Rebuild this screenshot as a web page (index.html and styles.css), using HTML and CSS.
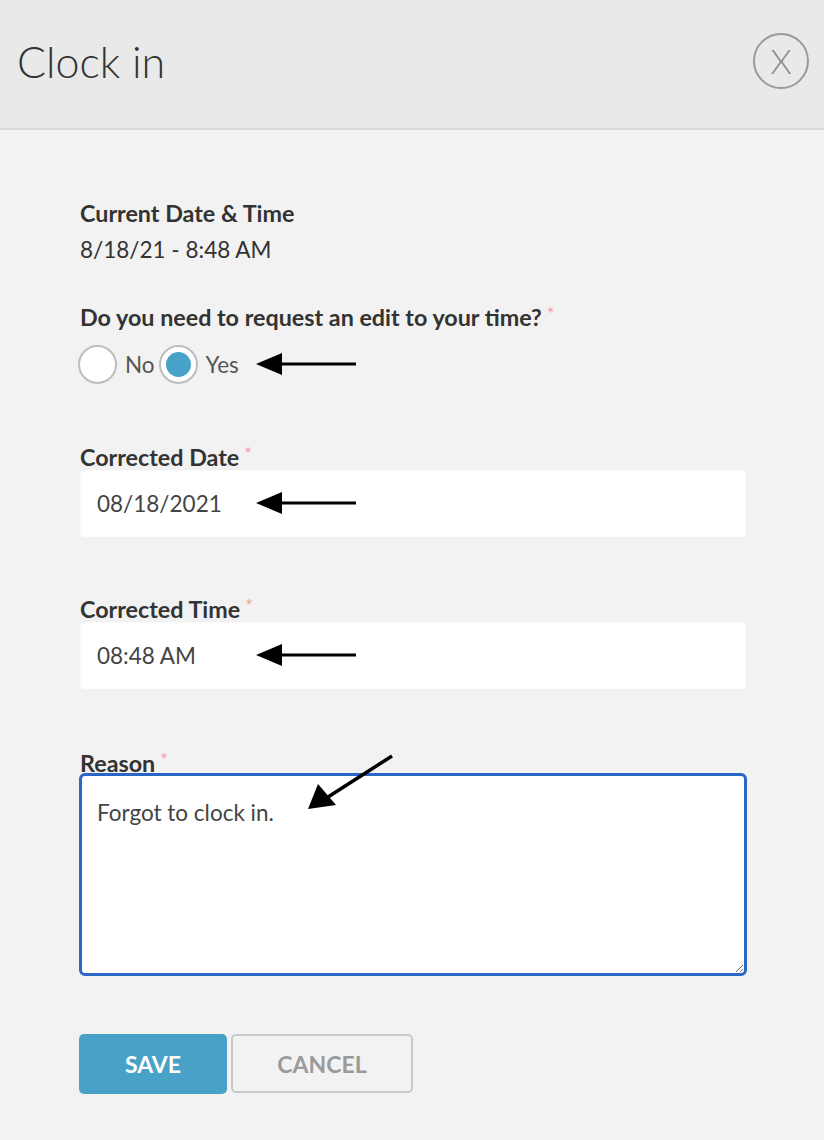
FILE: index.html
```html
<!DOCTYPE html>
<html lang="en">
<head>
    <meta charset="UTF-8">
    <meta name="viewport" content="width=device-width, initial-scale=1.0">
    <title>Clock in</title>
    <link rel="stylesheet" href="styles.css">
</head>
<body>
    <div class="modal">
        <header class="modal-header">
            <h1>Clock in</h1>
            <button class="close-btn" type="button">X</button>
        </header>

        <form class="modal-body">
            <div class="field">
                <div class="label">Current Date &amp; Time</div>
                <div class="value">8/18/21 - 8:48 AM</div>
            </div>

            <div class="field question">
                <div class="label">Do you need to request an edit to your time?<span class="req">*</span></div>
                <div class="radios">
                    <span class="radio"></span>
                    <span class="radio-text">No</span>
                    <span class="radio checked"></span>
                    <span class="radio-text">Yes</span>
                    <svg class="arrow" width="102" height="24" viewBox="0 0 102 24"><path d="M100 12H22" stroke="#000" stroke-width="3"/><path d="M0 12L26 1V23Z" fill="#000"/></svg>
                </div>
            </div>

            <div class="field gap-date">
                <div class="label">Corrected Date<span class="req">*</span></div>
                <div class="input">
                    08/18/2021
                    <svg class="arrow" width="102" height="24" viewBox="0 0 102 24"><path d="M100 12H22" stroke="#000" stroke-width="3"/><path d="M0 12L26 1V23Z" fill="#000"/></svg>
                </div>
            </div>

            <div class="field gap-time">
                <div class="label">Corrected Time<span class="req">*</span></div>
                <div class="input">
                    08:48 AM
                    <svg class="arrow" width="102" height="24" viewBox="0 0 102 24"><path d="M100 12H22" stroke="#000" stroke-width="3"/><path d="M0 12L26 1V23Z" fill="#000"/></svg>
                </div>
            </div>

            <div class="field gap-date reason">
                <div class="label">Reason<span class="req">*</span></div>
                <textarea class="textarea">Forgot to clock in.</textarea>
                <svg class="arrow-diag" width="90" height="60" viewBox="0 0 90 60"><path d="M86 3L22 44" stroke="#000" stroke-width="3.5"/><path d="M2 56L12 31L30 52Z" fill="#000"/></svg>
            </div>

            <div class="actions">
                <button class="btn btn-save" type="button">Save</button>
                <button class="btn btn-cancel" type="button">Cancel</button>
            </div>
        </form>
    </div>
</body>
</html>
```

FILE: styles.css
```css
* {
    margin: 0;
    padding: 0;
    box-sizing: border-box;
}

body {
    font-family: Lato, 'Open Sans', sans-serif;
    background-color: #f2f2f2;
    color: #333;
}

.modal {
    width: 824px;
    min-height: 1140px;
    background-color: #f2f2f2;
}

.modal-header {
    height: 130px;
    background-color: #e9e9e9;
    border-bottom: 2px solid #d9d9d9;
    display: flex;
    align-items: center;
    justify-content: space-between;
    padding: 0 15px 6px 17px;
}

.modal-header h1 {
    font-weight: 300;
    font-size: 43px;
    color: #333;
}

.close-btn {
    width: 56px;
    height: 56px;
    border-radius: 50%;
    border: 2px solid #9a9a9a;
    background: transparent;
    font-family: Lato, sans-serif;
    font-weight: 300;
    font-size: 34px;
    color: #8a8a8a;
    display: flex;
    align-items: center;
    justify-content: center;
    padding-bottom: 1px;
}

.modal-body {
    padding: 71px 78px 40px 80px;
    display: flex;
    flex-direction: column;
}

.field {
    position: relative;
}

.label {
    font-weight: 700;
    font-size: 23.3px;
    line-height: 24px;
    color: #333;
}

.req {
    color: #f29a9a;
    font-weight: 400;
    font-size: 18px;
    margin-left: 5px;
    vertical-align: top;
    position: relative;
    top: -4px;
}

.value {
    font-size: 22.5px;
    line-height: 24px;
    margin-top: 13px;
    color: #333;
}

.question {
    margin-top: 43px;
}

.radios {
    display: flex;
    align-items: center;
    margin-top: 16px;
    margin-left: -2px;
    height: 38px;
    position: relative;
}

.radio {
    width: 39px;
    height: 39px;
    border-radius: 50%;
    border: 2px solid #bdbdbd;
    background-color: #fff;
    display: flex;
    align-items: center;
    justify-content: center;
}

.radio.checked::after {
    content: "";
    width: 25px;
    height: 25px;
    border-radius: 50%;
    background-color: #48a1c6;
}

.radio-text {
    font-size: 22.5px;
    color: #555;
    margin: 0 4px 0 8px;
}

.arrow {
    position: absolute;
    left: 176px;
    top: 50%;
    transform: translateY(-50%);
}

.radios .arrow {
    left: 178px;
}

.gap-date {
    margin-top: 62px;
}

.gap-time {
    margin-top: 60px;
}

.input {
    position: relative;
    height: 68px;
    background-color: #fff;
    border-radius: 5px;
    box-shadow: inset 0 1px 2px rgba(0, 0, 0, 0.08);
    display: flex;
    align-items: center;
    padding-left: 17px;
    font-size: 22.5px;
    color: #444;
}

.textarea {
    display: block;
    width: 668px;
    height: 203px;
    margin-left: -1px;
    margin-top: -2px;
    border: 3px solid #2a66c6;
    border-radius: 6px;
    background-color: #fff;
    padding: 23px 15px;
    font-family: Lato, sans-serif;
    font-size: 22.5px;
    line-height: 28px;
    color: #444;
    outline: none;
}

.arrow-diag {
    position: absolute;
    left: 226px;
    top: 2px;
}

.actions {
    display: flex;
    gap: 4px;
    margin-top: 58px;
    margin-left: -1px;
}

.btn {
    height: 60px;
    border-radius: 5px;
    font-family: Lato, sans-serif;
    font-weight: 700;
    font-size: 23px;
    text-transform: uppercase;
    cursor: pointer;
}

.btn-save {
    width: 148px;
    background-color: #48a1c6;
    color: #fff;
    border: none;
}

.btn-cancel {
    width: 182px;
    height: 59px;
    background-color: #f2f2f2;
    color: #9a9a9a;
    border: 2px solid #c8c8c8;
}
```
